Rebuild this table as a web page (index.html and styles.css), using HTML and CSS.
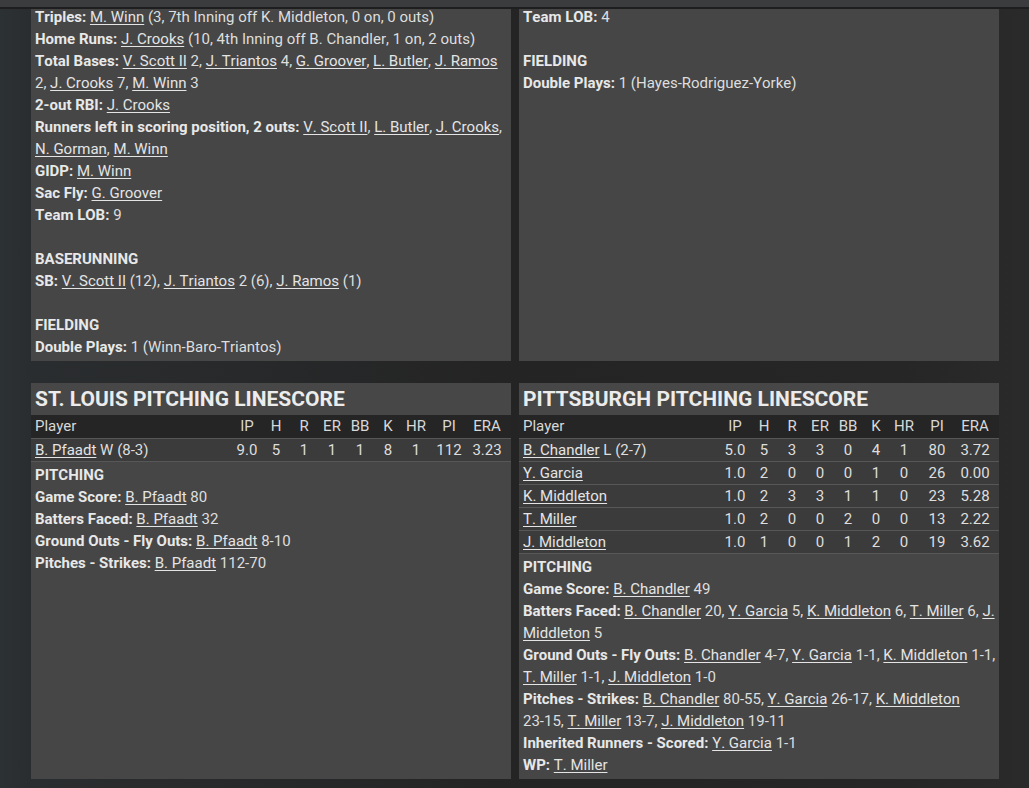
FILE: index.html
```html
<!DOCTYPE html>
<html lang="en">
<head>
<meta charset="utf-8">
<title>Box Score</title>
<link rel="stylesheet" href="styles.css">
</head>
<body>
<div class="topbar"></div>
<div class="viewport">
  <div class="grid">
    <section class="panel notes top">
      <div class="line"><b>Triples:</b> <a>M. Winn</a> (3, 7th Inning off K. Middleton, 0 on, 0 outs)</div>
      <div class="line"><b>Home Runs:</b> <a>J. Crooks</a> (10, 4th Inning off B. Chandler, 1 on, 2 outs)</div>
      <div class="line"><b>Total Bases:</b> <a>V. Scott II</a> 2, <a>J. Triantos</a> 4, <a>G. Groover</a>, <a>L. Butler</a>, <a>J. Ramos</a> 2, <a>J. Crooks</a> 7, <a>M. Winn</a> 3</div>
      <div class="line"><b>2-out RBI:</b> <a>J. Crooks</a></div>
      <div class="line"><b>Runners left in scoring position, 2 outs:</b> <a>V. Scott II</a>, <a>L. Butler</a>, <a>J. Crooks</a>, <a>N. Gorman</a>, <a>M. Winn</a></div>
      <div class="line"><b>GIDP:</b> <a>M. Winn</a></div>
      <div class="line"><b>Sac Fly:</b> <a>G. Groover</a></div>
      <div class="line"><b>Team LOB:</b> 9</div>
      <div class="line blank"></div>
      <div class="line"><b>BASERUNNING</b></div>
      <div class="line"><b>SB:</b> <a>V. Scott II</a> (12), <a>J. Triantos</a> 2 (6), <a>J. Ramos</a> (1)</div>
      <div class="line blank"></div>
      <div class="line"><b>FIELDING</b></div>
      <div class="line"><b>Double Plays:</b> 1 (Winn-Baro-Triantos)</div>
    </section>
    <section class="panel notes top">
      <div class="line"><b>Team LOB:</b> 4</div>
      <div class="line blank"></div>
      <div class="line"><b>FIELDING</b></div>
      <div class="line"><b>Double Plays:</b> 1 (Hayes-Rodriguez-Yorke)</div>
    </section>

    <section class="panel">
      <h2 class="title">ST. LOUIS PITCHING LINESCORE</h2>
      <div class="table">
        <div class="row head"><span class="pl">Player</span><span>IP</span><span>H</span><span>R</span><span>ER</span><span>BB</span><span>K</span><span>HR</span><span>PI</span><span>ERA</span></div>
        <div class="row"><span class="pl"><a>B. Pfaadt</a> W (8-3)</span><span>9.0</span><span>5</span><span>1</span><span>1</span><span>1</span><span>8</span><span>1</span><span>112</span><span>3.23</span></div>
      </div>
      <div class="notes">
        <div class="line"><b>PITCHING</b></div>
        <div class="line"><b>Game Score:</b> <a>B. Pfaadt</a> 80</div>
        <div class="line"><b>Batters Faced:</b> <a>B. Pfaadt</a> 32</div>
        <div class="line"><b>Ground Outs - Fly Outs:</b> <a>B. Pfaadt</a> <span class="nw">8-10</span></div>
        <div class="line"><b>Pitches - Strikes:</b> <a>B. Pfaadt</a> <span class="nw">112-70</span></div>
      </div>
    </section>

    <section class="panel">
      <h2 class="title">PITTSBURGH PITCHING LINESCORE</h2>
      <div class="table">
        <div class="row head"><span class="pl">Player</span><span>IP</span><span>H</span><span>R</span><span>ER</span><span>BB</span><span>K</span><span>HR</span><span>PI</span><span>ERA</span></div>
        <div class="row"><span class="pl"><a>B. Chandler</a> L (2-7)</span><span>5.0</span><span>5</span><span>3</span><span>3</span><span>0</span><span>4</span><span>1</span><span>80</span><span>3.72</span></div>
        <div class="row"><span class="pl"><a>Y. Garcia</a></span><span>1.0</span><span>2</span><span>0</span><span>0</span><span>0</span><span>1</span><span>0</span><span>26</span><span>0.00</span></div>
        <div class="row"><span class="pl"><a>K. Middleton</a></span><span>1.0</span><span>2</span><span>3</span><span>3</span><span>1</span><span>1</span><span>0</span><span>23</span><span>5.28</span></div>
        <div class="row"><span class="pl"><a>T. Miller</a></span><span>1.0</span><span>2</span><span>0</span><span>0</span><span>2</span><span>0</span><span>0</span><span>13</span><span>2.22</span></div>
        <div class="row"><span class="pl"><a>J. Middleton</a></span><span>1.0</span><span>1</span><span>0</span><span>0</span><span>1</span><span>2</span><span>0</span><span>19</span><span>3.62</span></div>
      </div>
      <div class="notes">
        <div class="line"><b>PITCHING</b></div>
        <div class="line"><b>Game Score:</b> <a>B. Chandler</a> 49</div>
        <div class="line"><b>Batters Faced:</b> <a>B. Chandler</a> 20, <a>Y. Garcia</a> 5, <a>K. Middleton</a> 6, <a>T. Miller</a> 6, <a>J. Middleton</a> 5</div>
        <div class="line"><b>Ground Outs - Fly Outs:</b> <a>B. Chandler</a> <span class="nw">4-7,</span> <a>Y. Garcia</a> <span class="nw">1-1,</span> <a>K. Middleton</a> <span class="nw">1-1,</span> <a>T. Miller</a> <span class="nw">1-1,</span> <a>J. Middleton</a> <span class="nw">1-0</span></div>
        <div class="line"><b>Pitches - Strikes:</b> <a>B. Chandler</a> <span class="nw">80-55,</span> <a>Y. Garcia</a> <span class="nw">26-17,</span> <a>K. Middleton</a> <span class="nw">23-15,</span> <a>T. Miller</a> <span class="nw">13-7,</span> <a>J. Middleton</a> <span class="nw">19-11</span></div>
        <div class="line"><b>Inherited Runners - Scored:</b> <a>Y. Garcia</a> <span class="nw">1-1</span></div>
        <div class="line"><b>WP:</b> <a>T. Miller</a></div>
      </div>
    </section>
  </div>
</div>
</body>
</html>
```
FILE: styles.css
```css
* { box-sizing: border-box; }
html, body { margin: 0; padding: 0; }
body {
  width: 1029px;
  height: 788px;
  overflow: hidden;
  background: linear-gradient(to right, #2c3134 0px, #2a2d2f 31px, #242424 500px, #262626 900px, #2a2a2a 1029px);
  font-family: "Roboto", "Liberation Sans", sans-serif;
  font-size: 15px;
  font-kerning: none;
  color: #dedede;
}
.topbar {
  height: 9px;
  background: #3a3c3d;
  border-bottom: 2px solid #1e1e1e;
}
.viewport {
  height: 779px;
  overflow: hidden;
}
.grid {
  margin-top: -3px;
  margin-left: 31px;
  width: 968px;
  display: grid;
  grid-template-columns: 480px 480px;
  column-gap: 8px;
  row-gap: 22px;
}
.panel {
  background: #464646;
  display: flex;
  flex-direction: column;
}
.notes {
  padding: 2px 1px 3px 4px;
}
.panel.top {
  padding: 0 1px 3px 4px;
}
.line {
  line-height: 22px;
  min-height: 22px;
}
.line b { font-weight: 700; color: #e8e8e8; }
.nw { white-space: nowrap; }
a {
  color: #e4e4e4;
  text-decoration: underline;
  text-underline-offset: 2px;
}
.title {
  margin: 0;
  height: 32px;
  line-height: 32px;
  padding-left: 4px;
  font-size: 21px;
  font-weight: 700;
  font-kerning: normal;
  color: #ececec;
  background: #474747;
}
.table {
  border-bottom: 1px solid #575757;
}
.row {
  display: grid;
  grid-template-columns: 1fr 30px 28px 28px 28px 28px 28px 28px 38px 38px;
  padding: 0 5px 0 4px;
  height: 23px;
  line-height: 22px;
  background: #3b3b3b;
  border-top: 1px solid #575757;
}
.row span { text-align: center; white-space: nowrap; }
.row span.pl { text-align: left; }
.row.head {
  background: #252525;
  border-top: 0;
  line-height: 23px;
  color: #d8d8d8;
}
```
